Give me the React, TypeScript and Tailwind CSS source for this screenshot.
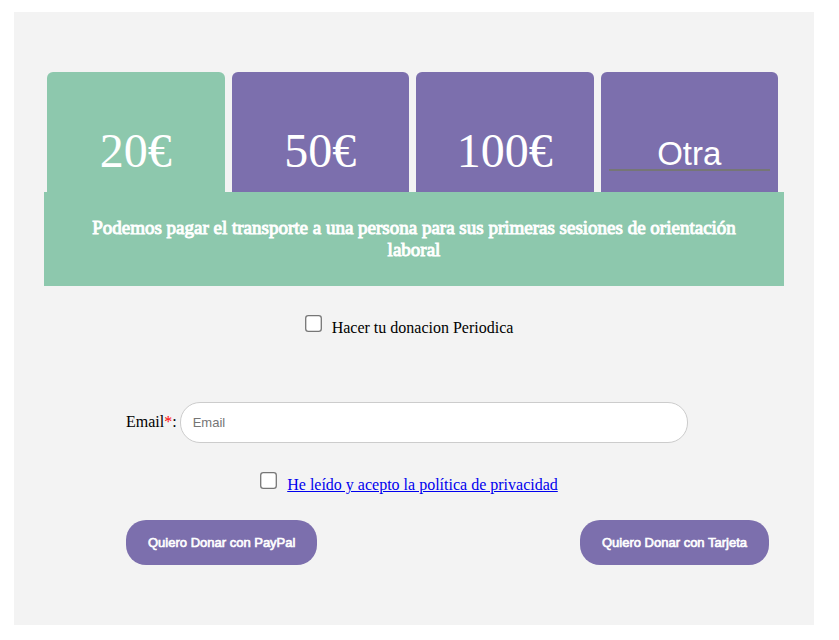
import { useState } from "react";

const amounts = [
  { value: "20", label: "20€" },
  { value: "50", label: "50€" },
  { value: "100", label: "100€" },
];

const serif = "font-['Liberation_Serif','Times_New_Roman',serif]";
const sans = "font-['Liberation_Sans',Arial,sans-serif]";
const donateButton = `${sans} h-[45px] cursor-pointer rounded-[20px] bg-[#7c6fad] px-[22px] text-[13px] text-white [-webkit-text-stroke:0.05em_white]`;

export default function App() {
  const [selected, setSelected] = useState("20");

  return (
    <main className={`${serif} pt-3 pr-[25px] pb-[15px] pl-[14px] text-base leading-[18px] text-black`}>
      <form
        className="bg-[#f3f3f3] px-[30px] py-[60px]"
        onSubmit={(event) => event.preventDefault()}
      >
        <div role="radiogroup" aria-label="Importe" className="grid grid-cols-4 gap-[7px] pr-[6px] pl-[3px]">
          {amounts.map((amount) => (
            <label
              key={amount.value}
              className={`flex h-[120px] cursor-pointer items-end justify-center rounded-t-[6px] pb-[14px] text-5xl leading-[54px] text-white ${
                selected === amount.value ? "bg-[#8dc8ad]" : "bg-[#7c6fad]"
              }`}
            >
              <input
                type="radio"
                name="amount"
                value={amount.value}
                checked={selected === amount.value}
                onChange={() => setSelected(amount.value)}
                className="sr-only"
              />
              {amount.label}
            </label>
          ))}
          <div
            className={`flex h-[120px] items-end rounded-t-[6px] px-2 pb-[21px] ${
              selected === "other" ? "bg-[#8dc8ad]" : "bg-[#7c6fad]"
            }`}
          >
            <input
              type="text"
              aria-label="Otra cantidad"
              placeholder="Otra"
              onFocus={() => setSelected("other")}
              className={`${sans} h-8 w-full min-w-0 border-b-2 border-[#767676] bg-transparent text-center text-[33px] leading-8 text-white outline-none placeholder:text-white`}
            />
          </div>
        </div>

        <div className="bg-[#8dc8ad] px-10 pt-[25px] pb-[25px]">
          <h3 className="text-center text-[19px] leading-[22px] font-normal text-white [-webkit-text-stroke:0.05em_white]">
            Podemos pagar el transporte a una persona para sus primeras sesiones de orientación laboral
          </h3>
        </div>

        <div className="mt-[29px] flex items-start justify-center pr-[10px]">
          <input id="periodic" type="checkbox" className="m-[2px] size-[13px] scale-130" />
          <label htmlFor="periodic" className="mt-1 ml-[10px]">
            Hacer tu donacion Periodica
          </label>
        </div>

        <div className="mt-[65px] pr-[15px] pl-[82px]">
          <div className="flex items-center pr-[81px]">
            <label htmlFor="email" className="mr-[3px] pb-[2px] whitespace-nowrap">
              Email<span className="text-[#ff0000]">*</span>:
            </label>
            <input
              id="email"
              type="email"
              placeholder="Email"
              className={`${sans} h-[41px] min-w-0 flex-1 rounded-[20px] border border-[#cccccc] bg-white px-3 text-[13px] placeholder:text-[#757575]`}
            />
          </div>
        </div>

        <div className="mt-[29px] flex items-start justify-center pr-[10px]">
          <input id="privacy" type="checkbox" aria-label="Acepto la política de privacidad" className="m-[2px] size-[13px] scale-130" />
          <a href="#privacidad" className="mt-1 ml-[10px] text-[#0000ee] underline">
            He leído y acepto la política de privacidad
          </a>
        </div>

        <div className="mt-[26px] flex justify-between pr-[15px] pl-[82px]">
          <button type="submit" className={donateButton}>
            Quiero Donar con PayPal
          </button>
          <button type="submit" className={donateButton}>
            Quiero Donar con Tarjeta
          </button>
        </div>
      </form>
    </main>
  );
}
